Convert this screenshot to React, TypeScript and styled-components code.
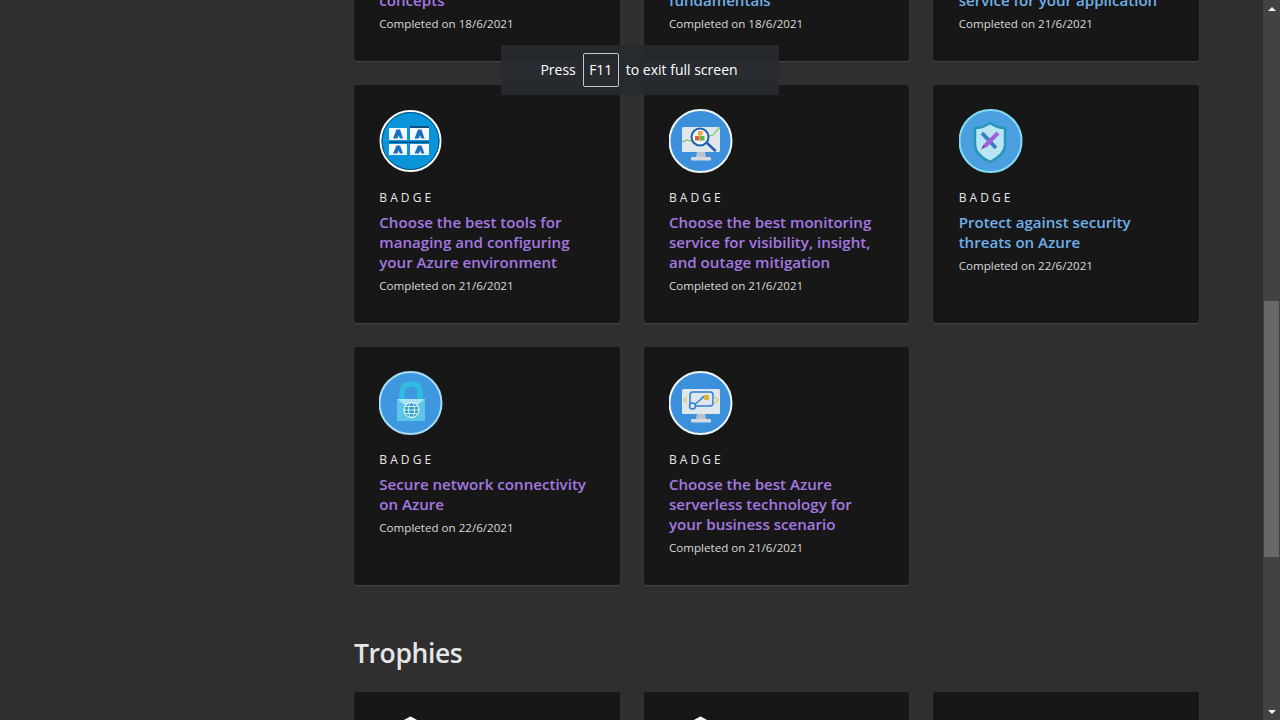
import React from 'react';
import styled, { createGlobalStyle } from 'styled-components';

const GlobalStyle = createGlobalStyle`
  html, body {
    margin: 0;
    height: 100%;
    overflow: hidden;
    background: #2f2f2f;
  }
  body {
    font-family: 'Open Sans', 'Noto Sans', sans-serif;
    color: #fff;
  }
`;

const StyledPage = styled.div`
  height: 720px;
  display: flex;
  overflow: hidden;
  position: relative;
`;
const StyledViewport = styled.div`
  flex: 1;
  overflow: hidden;
  padding-left: 354px;
  padding-right: 64px;
`;
const StyledContent = styled.div`
  margin-top: -177px;
`;
const StyledGrid = styled.div`
  display: grid;
  grid-template-columns: repeat(3, 1fr);
  gap: 24px;
`;
const StyledCard = styled.div`
  height: 238px;
  box-sizing: border-box;
  background: #171717;
  border-radius: 3px;
  box-shadow: 0 1px 2px 0 #474747;
  padding: 24px 25.3px;
`;
const StyledIconWrap = styled.div`
  width: 64px;
  height: 64px;
`;
const StyledLabel = styled.div`
  margin-top: 17px;
  height: 16px;
  font-size: 12px;
  line-height: 16px;
  letter-spacing: 3.1px;
  color: #e8e8e8;
`;
const StyledTitle = styled.div<{ $visited?: boolean }>`
  margin-top: 6px;
  font-size: 15.1px;
  line-height: 20px;
  font-weight: 600;
  white-space: pre-line;
  color: ${(p) => (p.$visited ? '#a678e2' : '#6fb1e8')};
`;
const StyledDate = styled.div`
  margin-top: 4px;
  font-size: 11.6px;
  line-height: 20px;
  color: #dadada;
`;
const StyledHeading = styled.h2`
  margin: 48px 0 19px;
  height: 40px;
  font-size: 26.5px;
  line-height: 40px;
  font-weight: 600;
  letter-spacing: -0.4px;
  color: #e6e6e6;
`;

const StyledScrollbar = styled.div`
  width: 17px;
  height: 720px;
  flex-shrink: 0;
  background: #424242;
  display: flex;
  flex-direction: column;
  align-items: center;
`;
const StyledArrow = styled.div<{ $down?: boolean }>`
  height: 17px;
  width: 17px;
  display: flex;
  align-items: center;
  justify-content: center;
  &::before {
    content: '';
    border-left: 4px solid transparent;
    border-right: 4px solid transparent;
    ${(p) =>
      p.$down ? 'border-top: 4px solid #f1f1f1;' : 'border-bottom: 4px solid #f1f1f1;'}
  }
`;
const StyledThumb = styled.div`
  width: 15px;
  height: 256px;
  margin-top: 284px;
  background: #686868;
`;
const StyledSpacer = styled.div`
  flex: 1;
`;

const StyledToast = styled.div`
  position: absolute;
  top: 45px;
  left: 501px;
  width: 278px;
  height: 50px;
  padding-right: 2px;
  box-sizing: border-box;
  background: rgba(39, 43, 48, 0.92);
  display: flex;
  align-items: center;
  justify-content: center;
  gap: 7px;
  font-size: 14px;
  color: #fff;
`;
const StyledToastText = styled.span`
  margin-bottom: 2px;
`;
const StyledKey = styled.span`
  width: 36px;
  height: 34px;
  box-sizing: border-box;
  padding-bottom: 2px;
  border: 1px solid #c4c6c9;
  border-radius: 2px;
  display: flex;
  align-items: center;
  justify-content: center;
`;

interface RingProps {
  fill: string;
  edge?: string;
  r?: number;
  children?: React.ReactNode;
}

const Ring: React.FC<RingProps> = ({ fill, edge = '#fff', r = 31, children }) => (
  <svg width="64" height="64" viewBox="0 0 64 64">
    <circle cx="31.500" cy="32" r={r} fill={fill} stroke={edge} strokeWidth="2" />
    {children}
  </svg>
);

const GridIcon = () => {
  const cells = [
    [10, 19, 18, 12],
    [31, 19, 19, 12],
    [10, 35, 18, 11],
    [31, 35, 19, 11]
  ];
  return (
    <Ring fill="#0a94da" r={30}>
      <circle cx="31.500" cy="32" r="28.500" fill="none" stroke="#0a4f7d" strokeWidth="1" />
      <rect x="31" y="17" width="19" height="2" fill="#0a4f7d" />
      <rect x="10" y="32.500" width="40" height="1.500" fill="#0a4f7d" />
      {cells.map(([x, y, w, h]) => (
        <g key={`${x}-${y}`}>
          <rect x={x} y={y} width={w} height={h} fill="#f4f8fb" />
          <path
            d={`M${x + w / 2 - 1.5} ${y + 1.500}h3.500l3 ${h - 3}h-3l-1.500-3-1 3h-4.500z`}
            fill="#1a6fc0"
          />
        </g>
      ))}
    </Ring>
  );
};

const MonitorBase = () => (
  <>
    <rect x="13" y="18" width="38" height="25" rx="1.500" fill="#dfe7ed" />
    <path d="M28 43h8l1 5h-10z" fill="#b9c3cc" />
    <rect x="22" y="48" width="20" height="3.500" rx="1" fill="#d3dae0" />
  </>
);

const MonitorIcon = () => (
  <Ring fill="#3c90db" edge="#eef6fc">
    <MonitorBase />
    <path d="M13 33l5-2 4 1 3-2M38 27l6-1 7-8" fill="none" stroke="#84c85a" strokeWidth="1.200" />
    <circle cx="31" cy="28" r="8.500" fill="#eaf5fc" stroke="#1f5fa8" strokeWidth="2" />
    <rect x="29" y="22" width="4.500" height="4.500" fill="#f0a53c" />
    <rect x="26" y="27" width="4.500" height="4.500" fill="#e0603a" />
    <rect x="31" y="27" width="4.500" height="4.500" fill="#6db33f" />
    <path d="M38 34l8 7.500" stroke="#1f5fa8" strokeWidth="2.500" strokeLinecap="round" />
  </Ring>
);

const ShieldIcon = () => (
  <Ring fill="#4b9fe0" edge="#82dcf2">
    <path
      d="M31 14c5 3.500 10 5 15 5v17c0 8-7 13-15 17-8-4-15-9-15-17V19c5 0 10-1.500 15-5z"
      fill="#b8e6f4"
      stroke="#2796b8"
      strokeWidth="2.500"
    />
    <path d="M23 24l14 15" stroke="#3f7ec4" strokeWidth="4" />
    <path d="M39 24L26 37" stroke="#a45fd8" strokeWidth="4" />
    <path d="M24.500 35.500l-2.500 5 5-2.500z" fill="#7d3fc0" />
  </Ring>
);

const LockIcon = () => (
  <Ring fill="#3f97e0" edge="#a4def5">
    <path
      d="M23 29V21c0-5 3.500-8 9-8s9 3 9 8v8"
      fill="none"
      stroke="#30bce2"
      strokeWidth="5.500"
    />
    <rect x="18" y="28" width="28" height="22" fill="#5cc6ea" />
    <path d="M18 28h28L32 39z" fill="#a4e4f5" />
    <circle cx="32.500" cy="39" r="7.500" fill="#2f9fd0" stroke="#fff" strokeWidth="1" />
    <ellipse cx="32.500" cy="39" rx="3" ry="7.500" fill="none" stroke="#fff" strokeWidth="0.800" />
    <path d="M25 39h15M26 35.500h13M26 42.500h13" stroke="#fff" strokeWidth="0.800" />
  </Ring>
);

const FlowIcon = () => (
  <Ring fill="#3c90db" edge="#eef6fc">
    <MonitorBase />
    <rect x="21" y="21" width="23" height="14" rx="3" fill="none" stroke="#2f7fd6" strokeWidth="1.500" />
    <path d="M25 34l6-5c2-2 3-3 5-4" fill="none" stroke="#2f7fd6" strokeWidth="1.500" />
    <circle cx="23.500" cy="35" r="3" fill="#dfe7ed" stroke="#2f7fd6" strokeWidth="1.500" />
    <rect x="35" y="24" width="5" height="5" fill="#e0b23a" />
    <path d="M18 26l-3 3 3 3M46 26l3 3-3 3" fill="none" stroke="#e8c468" strokeWidth="1.500" />
  </Ring>
);

const TrophyIcon = () => (
  <svg width="64" height="64" viewBox="0 0 64 64">
    <path
      d="M31.500 2l25 14v32l-25 14-25-14V16z"
      fill="#2f8fd8"
      stroke="#f2f8fc"
      strokeWidth="3"
      strokeLinejoin="round"
    />
  </svg>
);

const rows = [
  {
    icon: null,
    title: 'Learn all about the core\nAzure cloud platform\nconcepts',
    date: '18/6/2021',
    visited: true
  },
  {
    icon: null,
    title: 'Start out with a tour of\nthe cloud platform\nfundamentals',
    date: '18/6/2021'
  },
  {
    icon: null,
    title: 'Choose the best Azure\nInternet of Things\nservice for your application',
    date: '21/6/2021'
  },
  {
    icon: <GridIcon />,
    title: 'Choose the best tools for managing and configuring your Azure environment',
    date: '21/6/2021',
    visited: true
  },
  {
    icon: <MonitorIcon />,
    title: 'Choose the best monitoring service for visibility, insight, and outage mitigation',
    date: '21/6/2021',
    visited: true
  },
  { icon: <ShieldIcon />, title: 'Protect against security threats on Azure', date: '22/6/2021' },
  { icon: <LockIcon />, title: 'Secure network connectivity on Azure', date: '22/6/2021', visited: true },
  {
    icon: <FlowIcon />,
    title: 'Choose the best Azure serverless technology for your business scenario',
    date: '21/6/2021',
    visited: true
  }
];

const App: React.FC = () => {
  return (
    <StyledPage>
      <GlobalStyle />
      <StyledViewport>
        <StyledContent>
          <StyledGrid>
            {rows.map((row) => (
              <StyledCard key={row.title}>
                <StyledIconWrap>{row.icon}</StyledIconWrap>
                <StyledLabel>BADGE</StyledLabel>
                <StyledTitle $visited={row.visited}>{row.title}</StyledTitle>
                <StyledDate>Completed on {row.date}</StyledDate>
              </StyledCard>
            ))}
          </StyledGrid>
          <StyledHeading>Trophies</StyledHeading>
          <StyledGrid>
            <StyledCard>
              <StyledIconWrap>
                <TrophyIcon />
              </StyledIconWrap>
            </StyledCard>
            <StyledCard>
              <StyledIconWrap>
                <TrophyIcon />
              </StyledIconWrap>
            </StyledCard>
            <StyledCard />
          </StyledGrid>
        </StyledContent>
      </StyledViewport>
      <StyledScrollbar>
        <StyledArrow />
        <StyledThumb />
        <StyledSpacer />
        <StyledArrow $down />
      </StyledScrollbar>
      <StyledToast>
        <StyledToastText>Press</StyledToastText>
        <StyledKey>F11</StyledKey>
        <StyledToastText>to exit full screen</StyledToastText>
      </StyledToast>
    </StyledPage>
  );
};

export default App;
